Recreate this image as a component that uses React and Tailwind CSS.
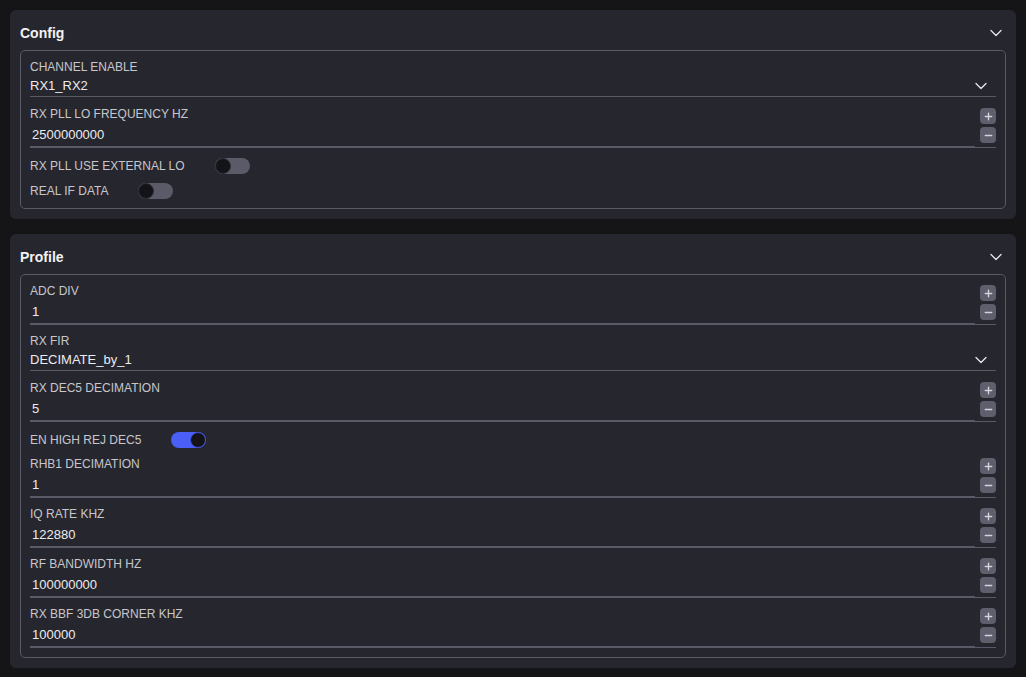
import React, { useState } from "react";
import { ChevronDown, Plus, Minus } from "lucide-react";

const font = { fontFamily: '"Liberation Sans", Arial, sans-serif' };

const SelectField = ({ label, value }) => (
  <div className="mb-px flex flex-col border-b border-[#5a5a66]">
    <span className="text-[12px] leading-4 text-[#c6c6cc]">{label}</span>
    <div className="flex h-[21px] items-center justify-between">
      <span className="text-[13px] text-[#ececef]">{value}</span>
      <ChevronDown size={20} strokeWidth={1.6} className="mr-[5px] text-[#e4e4e8]" />
    </div>
  </div>
);

const NumberField = ({ label, value }) => (
  <div className="flex items-end border-b border-[#5a5a66]">
    <div className="flex flex-1 flex-col">
      <span className="text-[12px] leading-4 text-[#c6c6cc]">{label}</span>
      <div className="flex h-[25px] items-center border-b border-[#5a5a66] pl-[2px] pt-[2px]">
        <span className="text-[13px] text-[#ececef]">{value}</span>
      </div>
    </div>
    <div className="mb-[4px] ml-[5px] flex flex-col gap-[3px]">
      <button className="flex h-4 w-4 items-center justify-center rounded-[4px] bg-[#5e5e6c] text-[#d4d4da]">
        <Plus size={11} strokeWidth={3} />
      </button>
      <button className="flex h-4 w-4 items-center justify-center rounded-[4px] bg-[#5e5e6c] text-[#d4d4da]">
        <Minus size={11} strokeWidth={3} />
      </button>
    </div>
  </div>
);

const Toggle = ({ label, initial }) => {
  const [on, setOn] = useState(initial);
  return (
    <div className="-mb-px mt-px flex h-[18px] items-center gap-[30px]">
      <span className="text-[12px] text-[#c6c6cc]">{label}</span>
      <button
        onClick={() => setOn(!on)}
        className={
          on
            ? "flex h-4 w-[35px] items-center justify-end rounded-full bg-[#4b5ef5]"
            : "flex h-4 w-[35px] items-center justify-start rounded-full bg-[#5a5a68]"
        }
      >
        <span
          className={
            on
              ? "h-4 w-4 rounded-full border border-[#3f4fd0] bg-[#141418]"
              : "h-4 w-4 rounded-full border border-[#2e2e36] bg-[#141418]"
          }
        />
      </button>
    </div>
  );
};

const Section = ({ title, children }) => (
  <div className="rounded-md bg-[#26262e] p-[10px]">
    <div className="mb-[4px] flex h-[26px] items-center justify-between">
      <h2 className="text-[14px] font-bold text-[#f2f2f4]">{title}</h2>
      <ChevronDown size={20} strokeWidth={1.6} className="text-[#e4e4e8]" />
    </div>
    <div className="flex flex-col gap-2 rounded-[5px] border border-[#5a5a66] px-[9px] pb-[9px] pt-[8px]">
      {children}
    </div>
  </div>
);

export default function App() {
  return (
    <div className="min-h-screen bg-[#151518] px-[10px] pt-[10px]" style={font}>
      <div className="flex flex-col gap-[15px]">
        <Section title="Config">
          <SelectField label="CHANNEL ENABLE" value="RX1_RX2" />
          <NumberField label="RX PLL LO FREQUENCY HZ" value="2500000000" />
          <div className="flex flex-col gap-[7px]">
            <Toggle label="RX PLL USE EXTERNAL LO" initial={false} />
            <Toggle label="REAL IF DATA" initial={false} />
          </div>
        </Section>

        <Section title="Profile">
          <NumberField label="ADC DIV" value="1" />
          <SelectField label="RX FIR" value="DECIMATE_by_1" />
          <NumberField label="RX DEC5 DECIMATION" value="5" />
          <Toggle label="EN HIGH REJ DEC5" initial={true} />
          <NumberField label="RHB1 DECIMATION" value="1" />
          <NumberField label="IQ RATE KHZ" value="122880" />
          <NumberField label="RF BANDWIDTH HZ" value="100000000" />
          <NumberField label="RX BBF 3DB CORNER KHZ" value="100000" />
        </Section>
      </div>
    </div>
  );
}
